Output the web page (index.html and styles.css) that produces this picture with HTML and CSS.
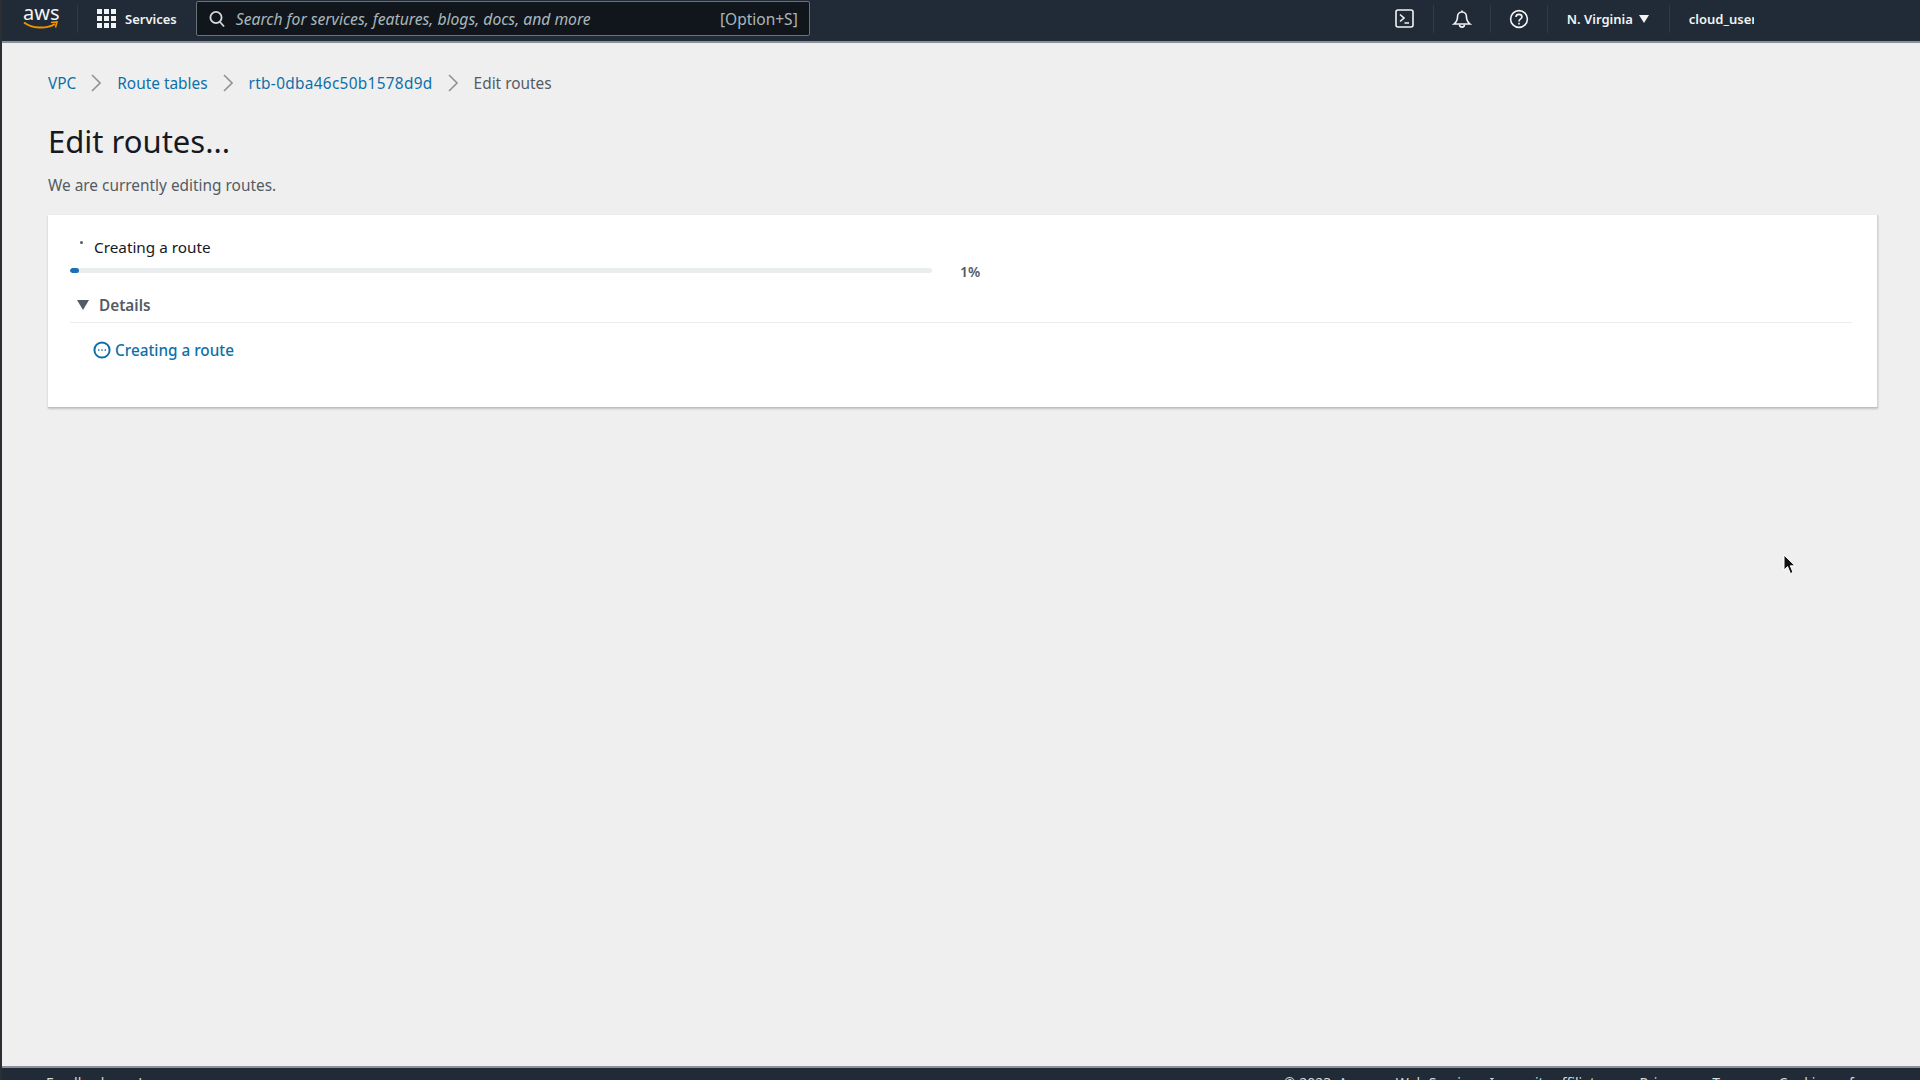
FILE: index.html
```html
<!DOCTYPE html>
<html lang="en">
<head>
    <meta charset="UTF-8">
    <meta name="viewport" content="width=device-width, initial-scale=1.0">
    <title>Edit routes</title>
    <link rel="stylesheet" href="styles.css">
</head>
<body>
    <header class="topbar">
        <div class="aws-logo">
            <span class="aws-word">aws</span>
            <svg class="aws-smile" width="36" height="10" viewBox="0 0 36 10">
                <path d="M1 1.5C9 7.5 23 8.5 32 3" fill="none" stroke="#f29100" stroke-width="2"/>
                <path d="M28 1.5L34 1L32.5 6.5" fill="none" stroke="#f29100" stroke-width="1.6"/>
            </svg>
        </div>
        <span class="bar-sep sep-logo"></span>
        <svg class="grid-icon" width="19" height="19" viewBox="0 0 19 19" fill="#f2f3f3">
            <rect x="0" y="0" width="5" height="5"/><rect x="7" y="0" width="5" height="5"/><rect x="14" y="0" width="5" height="5"/>
            <rect x="0" y="7" width="5" height="5"/><rect x="7" y="7" width="5" height="5"/><rect x="14" y="7" width="5" height="5"/>
            <rect x="0" y="14" width="5" height="5"/><rect x="7" y="14" width="5" height="5"/><rect x="14" y="14" width="5" height="5"/>
        </svg>
        <span class="services">Services</span>
        <div class="search">
            <svg class="search-icon" width="17" height="18" viewBox="0 0 17 18" fill="none" stroke="#d5dbdb" stroke-width="1.8">
                <circle cx="7" cy="7.5" r="5.6"/>
                <path d="M11 12L15 16.5"/>
            </svg>
            <span class="search-text">Search for services, features, blogs, docs, and more</span>
            <span class="search-key">[Option+S]</span>
        </div>
        <div class="bar-right">
            <svg class="bar-icon icon-shell" width="19" height="19" viewBox="0 0 19 19" fill="none" stroke="#f2f3f3" stroke-width="1.6">
                <rect x="1" y="1" width="17" height="17" rx="2"/>
                <path d="M5 5.5L9 9L5 12.5M9.5 14H14"/>
            </svg>
            <span class="bar-sep"></span>
            <svg class="bar-icon icon-bell" width="20" height="20" viewBox="0 0 20 20" fill="none" stroke="#f2f3f3" stroke-width="1.6">
                <path d="M10 1.5V3M10 3C7 3 5.5 5.5 5.5 8C5.5 11 4.5 13 2 15H18C15.5 13 14.5 11 14.5 8C14.5 5.5 13 3 10 3Z"/>
                <path d="M7.5 15.5C7.5 19 12.5 19 12.5 15.5"/>
            </svg>
            <span class="bar-sep"></span>
            <svg class="bar-icon icon-help" width="20" height="20" viewBox="0 0 20 20" fill="none" stroke="#f2f3f3" stroke-width="1.6">
                <circle cx="10" cy="10" r="8.4"/>
                <path d="M7 8C7 4.5 13 4.5 13 8C13 10 10 10 10 12.5"/>
                <path d="M10 13.8V15.4"/>
            </svg>
            <span class="bar-sep"></span>
            <span class="region">N. Virginia</span>
            <svg class="region-caret" width="10" height="8" viewBox="0 0 10 8" fill="#f2f3f3"><path d="M0 0H10L5 8Z"/></svg>
            <span class="bar-sep"></span>
            <span class="user">cloud_user</span>
        </div>
    </header>

    <main class="content">
        <nav class="crumbs">
            <a class="crumb">VPC</a>
            <svg class="chev" width="10" height="18" viewBox="0 0 10 18"><path d="M1 1L9 9L1 17" fill="none" stroke="#8d9596" stroke-width="1.6"/></svg>
            <a class="crumb">Route tables</a>
            <svg class="chev" width="10" height="18" viewBox="0 0 10 18"><path d="M1 1L9 9L1 17" fill="none" stroke="#8d9596" stroke-width="1.6"/></svg>
            <a class="crumb crumb-id">rtb-0dba46c50b1578d9d</a>
            <svg class="chev" width="10" height="18" viewBox="0 0 10 18"><path d="M1 1L9 9L1 17" fill="none" stroke="#8d9596" stroke-width="1.6"/></svg>
            <span class="crumb-current">Edit routes</span>
        </nav>

        <h1 class="page-title">Edit routes...</h1>
        <p class="page-desc">We are currently editing routes.</p>

        <section class="card">
            <div class="progress-label"><span class="tiny-dot"></span>Creating a route</div>
            <div class="progress-row">
                <div class="progress-track"><div class="progress-fill"></div></div>
                <span class="progress-pct">1%</span>
            </div>
            <div class="details-head">
                <svg class="details-caret" width="12" height="10" viewBox="0 0 12 10" fill="#545b64"><path d="M0 0H12L6 10Z"/></svg>
                <span>Details</span>
            </div>
            <div class="status-row">
                <svg width="18" height="18" viewBox="0 0 18 18" fill="none" stroke="#0e6fa8" stroke-width="2">
                    <circle cx="9" cy="9" r="7.6"/>
                    <path d="M5 9H6.4M8.3 9H9.7M11.6 9H13" stroke-width="1.6"/>
                </svg>
                <span class="status-text">Creating a route</span>
            </div>
        </section>
    </main>

    <footer class="bottombar">
        <span class="foot-left">Feedback</span>
        <span class="foot-left foot-lang">Language</span>
        <div class="foot-right">
            <span>© 2023, Amazon Web Services, Inc. or its affiliates.</span>
            <span>Privacy</span>
            <span>Terms</span>
            <span>Cookie preferences</span>
        </div>
    </footer>

    <svg class="cursor" width="14" height="22" viewBox="0 0 14 22">
        <path d="M1 1V16L4.6 12.6L7.4 19.5L10 18.4L7.3 11.8H12Z" fill="#111" stroke="#fff" stroke-width="1"/>
    </svg>
</body>
</html>
```

FILE: styles.css
```css
* {
    box-sizing: border-box;
}

html, body {
    height: 100%;
}

body {
    margin: 0;
    display: flex;
    flex-direction: column;
    height: 100vh;
    overflow: hidden;
    border-left: 2px solid #2b2f33;
    background-color: #efefef;
    color: #16191f;
    font-family: "Noto Sans", "Open Sans", sans-serif;
}

.topbar {
    flex: none;
    display: flex;
    align-items: center;
    height: 43px;
    padding-bottom: 4px;
    background-color: #202b37;
    border-bottom: 2px solid #8a9299;
    color: #f2f3f3;
}

.aws-logo {
    display: flex;
    flex-direction: column;
    align-items: flex-start;
    width: 54px;
    margin-left: 21px;
    margin-top: -2px;
}

.aws-word {
    font-size: 20px;
    line-height: 18px;
    color: #f2f3f3;
}

.aws-smile {
    margin-top: -1px;
}

.bar-sep {
    flex: none;
    width: 1px;
    height: 28px;
    background-color: #2f3b47;
}

.sep-logo {
    margin-right: 19px;
}

.grid-icon {
    flex: none;
}

.services {
    margin-left: 9px;
    font-size: 13px;
    font-weight: 600;
}

.search {
    display: flex;
    align-items: center;
    width: 614px;
    height: 35px;
    margin-left: 19px;
    padding: 0 11px 0 12px;
    background-color: #11161d;
    border: 1px solid #687078;
    border-radius: 2px;
}

.search-text {
    flex: 1;
    margin-left: 10px;
    font-size: 15.7px;
    font-style: italic;
    color: #aab7b8;
}

.search-key {
    font-size: 15.5px;
    color: #aab7b8;
}

.bar-right {
    display: flex;
    align-items: center;
    margin-left: 585px;
    font-size: 13px;
    font-weight: 600;
}

.icon-shell {
    margin-right: 19px;
}

.icon-bell {
    margin: 0 18px;
}

.icon-help {
    margin: 0 18px;
}

.region {
    margin-left: 19px;
}

.region-caret {
    margin-left: 6px;
    margin-right: 20px;
}

.user {
    display: block;
    width: 65px;
    margin-left: 19px;
    overflow: hidden;
    white-space: nowrap;
}

.content {
    flex: 1;
    padding: 28px 42px 0 46px;
}

.crumbs {
    display: flex;
    align-items: center;
    height: 24px;
    font-size: 15.4px;
}

.crumb {
    color: #0e6fa8;
}

.crumb-id {
    letter-spacing: 0.3px;
}

.crumb-current {
    color: #545b64;
}

.chev {
    margin: 0 16px 0 15px;
}

.page-title {
    margin: 26px 0 0;
    font-size: 31px;
    font-weight: 400;
    line-height: 40px;
}

.page-desc {
    margin: 13px 0 0;
    font-size: 15.4px;
    line-height: 24px;
    color: #545b64;
}

.card {
    height: 193px;
    margin-top: 17px;
    padding: 20px 25px 0 22px;
    background-color: #fff;
    border-right: 1px solid #cfd3d3;
    border-bottom: 1px solid #b9c0c0;
    box-shadow: 0 1px 2px rgba(0, 0, 0, 0.2);
}

.progress-label {
    display: flex;
    align-items: center;
    position: relative;
    height: 24px;
    padding-left: 24px;
    font-size: 15.3px;
}

.tiny-dot {
    position: absolute;
    left: 10px;
    top: 6px;
    width: 3px;
    height: 3px;
    border-radius: 50%;
    background-color: #545b64;
}

.progress-row {
    display: flex;
    align-items: center;
    height: 20px;
    margin-top: 1px;
}

.progress-track {
    width: 862px;
    height: 5px;
    background-color: #eaeded;
    border-radius: 3px;
    overflow: hidden;
}

.progress-fill {
    width: 9px;
    height: 5px;
    background-color: #1f6fb5;
    border-radius: 3px;
}

.progress-pct {
    margin-left: 28px;
    padding-top: 2px;
    font-size: 14px;
    font-weight: 600;
    color: #545b64;
}

.details-head {
    display: flex;
    align-items: center;
    height: 32px;
    margin-top: 11px;
    padding-left: 7px;
    padding-bottom: 4px;
    font-size: 15.3px;
    font-weight: 600;
    color: #545b64;
    border-bottom: 1px solid #eaeded;
}

.details-caret {
    margin-right: 10px;
}

.status-row {
    display: flex;
    align-items: center;
    gap: 4px;
    margin-top: 17px;
    padding-left: 23px;
    font-size: 15.3px;
    font-weight: 500;
    color: #0e6fa8;
}

.bottombar {
    flex: none;
    display: flex;
    height: 14px;
    overflow: hidden;
    padding: 7px 15px 0 44px;
    background-color: #202b37;
    border-top: 2px solid #8a9299;
    font-size: 14px;
    line-height: 16px;
    color: #d5dbdb;
    white-space: nowrap;
}

.foot-lang {
    margin-left: 30px;
}

.foot-right {
    display: flex;
    gap: 26px;
    margin-left: auto;
}

.cursor {
    position: absolute;
    left: 1783px;
    top: 554px;
}
```
